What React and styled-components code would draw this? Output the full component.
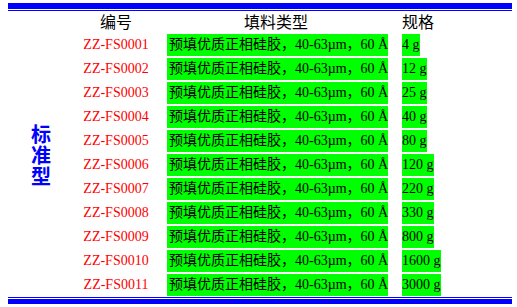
import React from "react"
import styled, { createGlobalStyle } from "styled-components"

const GlobalStyle = createGlobalStyle`
  body {
    margin: 0;
    background: #ffffff;
  }
`

const rows = [
  ["ZZ-FS0001", "4 g"],
  ["ZZ-FS0002", "12 g"],
  ["ZZ-FS0003", "25 g"],
  ["ZZ-FS0004", "40 g"],
  ["ZZ-FS0005", "80 g"],
  ["ZZ-FS0006", "120 g"],
  ["ZZ-FS0007", "220 g"],
  ["ZZ-FS0008", "330 g"],
  ["ZZ-FS0009", "800 g"],
  ["ZZ-FS0010", "1600 g"],
  ["ZZ-FS0011", "3000 g"],
]

const packing = "预填优质正相硅胶，40-63µm，60 Å"

export default function App() {
  return (
    <Page>
      <GlobalStyle />
      <TopRule />
      <Table>
        <Label>标准型</Label>
        <Head $col={2} $padRight={9}>编号</Head>
        <Head $col={3} $padRight={17}>填料类型</Head>
        <Head $col={4} $align="left">规格</Head>
        {rows.map(([code, size]) => (
          <React.Fragment key={code}>
            <Code>{code}</Code>
            <Packing>
              <Mark $padLeft={2}>{packing}</Mark>
            </Packing>
            <Size>
              <Mark>{size}</Mark>
            </Size>
          </React.Fragment>
        ))}
      </Table>
      <BottomRule />
    </Page>
  )
}

const Page = styled.div`
  padding: 3px 5px 0 8px;
`

const TopRule = styled.div`
  height: 1px;
  border-top: 6px solid #0000ff;
  border-bottom: 1px solid #0000ff;
`

const BottomRule = styled.div`
  height: 1px;
  border-top: 1px solid #0000ff;
  border-bottom: 5px solid #0000ff;
`

const Table = styled.div`
  display: grid;
  grid-template-columns: 66px 93px 235px 1fr;
  grid-template-rows: 21px repeat(11, 22px);
  row-gap: 2px;
  padding-bottom: 1px;
  font-family: "Liberation Serif", "Noto Sans CJK SC", serif;
  font-size: 14px;
  color: #000000;
`

const Label = styled.div`
  grid-column: 1;
  grid-row: 1 / span 12;
  align-self: center;
  justify-self: center;
  width: 20px;
  margin-top: 1px;
  font-family: "Noto Sans CJK SC", sans-serif;
  font-size: 20px;
  font-weight: 700;
  line-height: 21px;
  color: #0000ff;
  text-align: center;
`

const Head = styled.div`
  grid-column: ${p => p.$col};
  padding-right: ${p => p.$padRight || 0}px;
  font-family: "Noto Sans CJK SC", sans-serif;
  font-size: 16px;
  line-height: 21px;
  text-align: ${p => p.$align || "center"};
`

const Code = styled.div`
  grid-column: 2;
  padding-right: 9px;
  line-height: 22px;
  color: #ff0000;
  text-align: center;
`

const Packing = styled.div`
  grid-column: 3;
  line-height: 22px;
`

const Size = styled.div`
  grid-column: 4;
  line-height: 22px;
`

const Mark = styled.span`
  display: inline-block;
  height: 22px;
  padding-left: ${p => p.$padLeft || 0}px;
  background: #00ff00;
  white-space: nowrap;
`
